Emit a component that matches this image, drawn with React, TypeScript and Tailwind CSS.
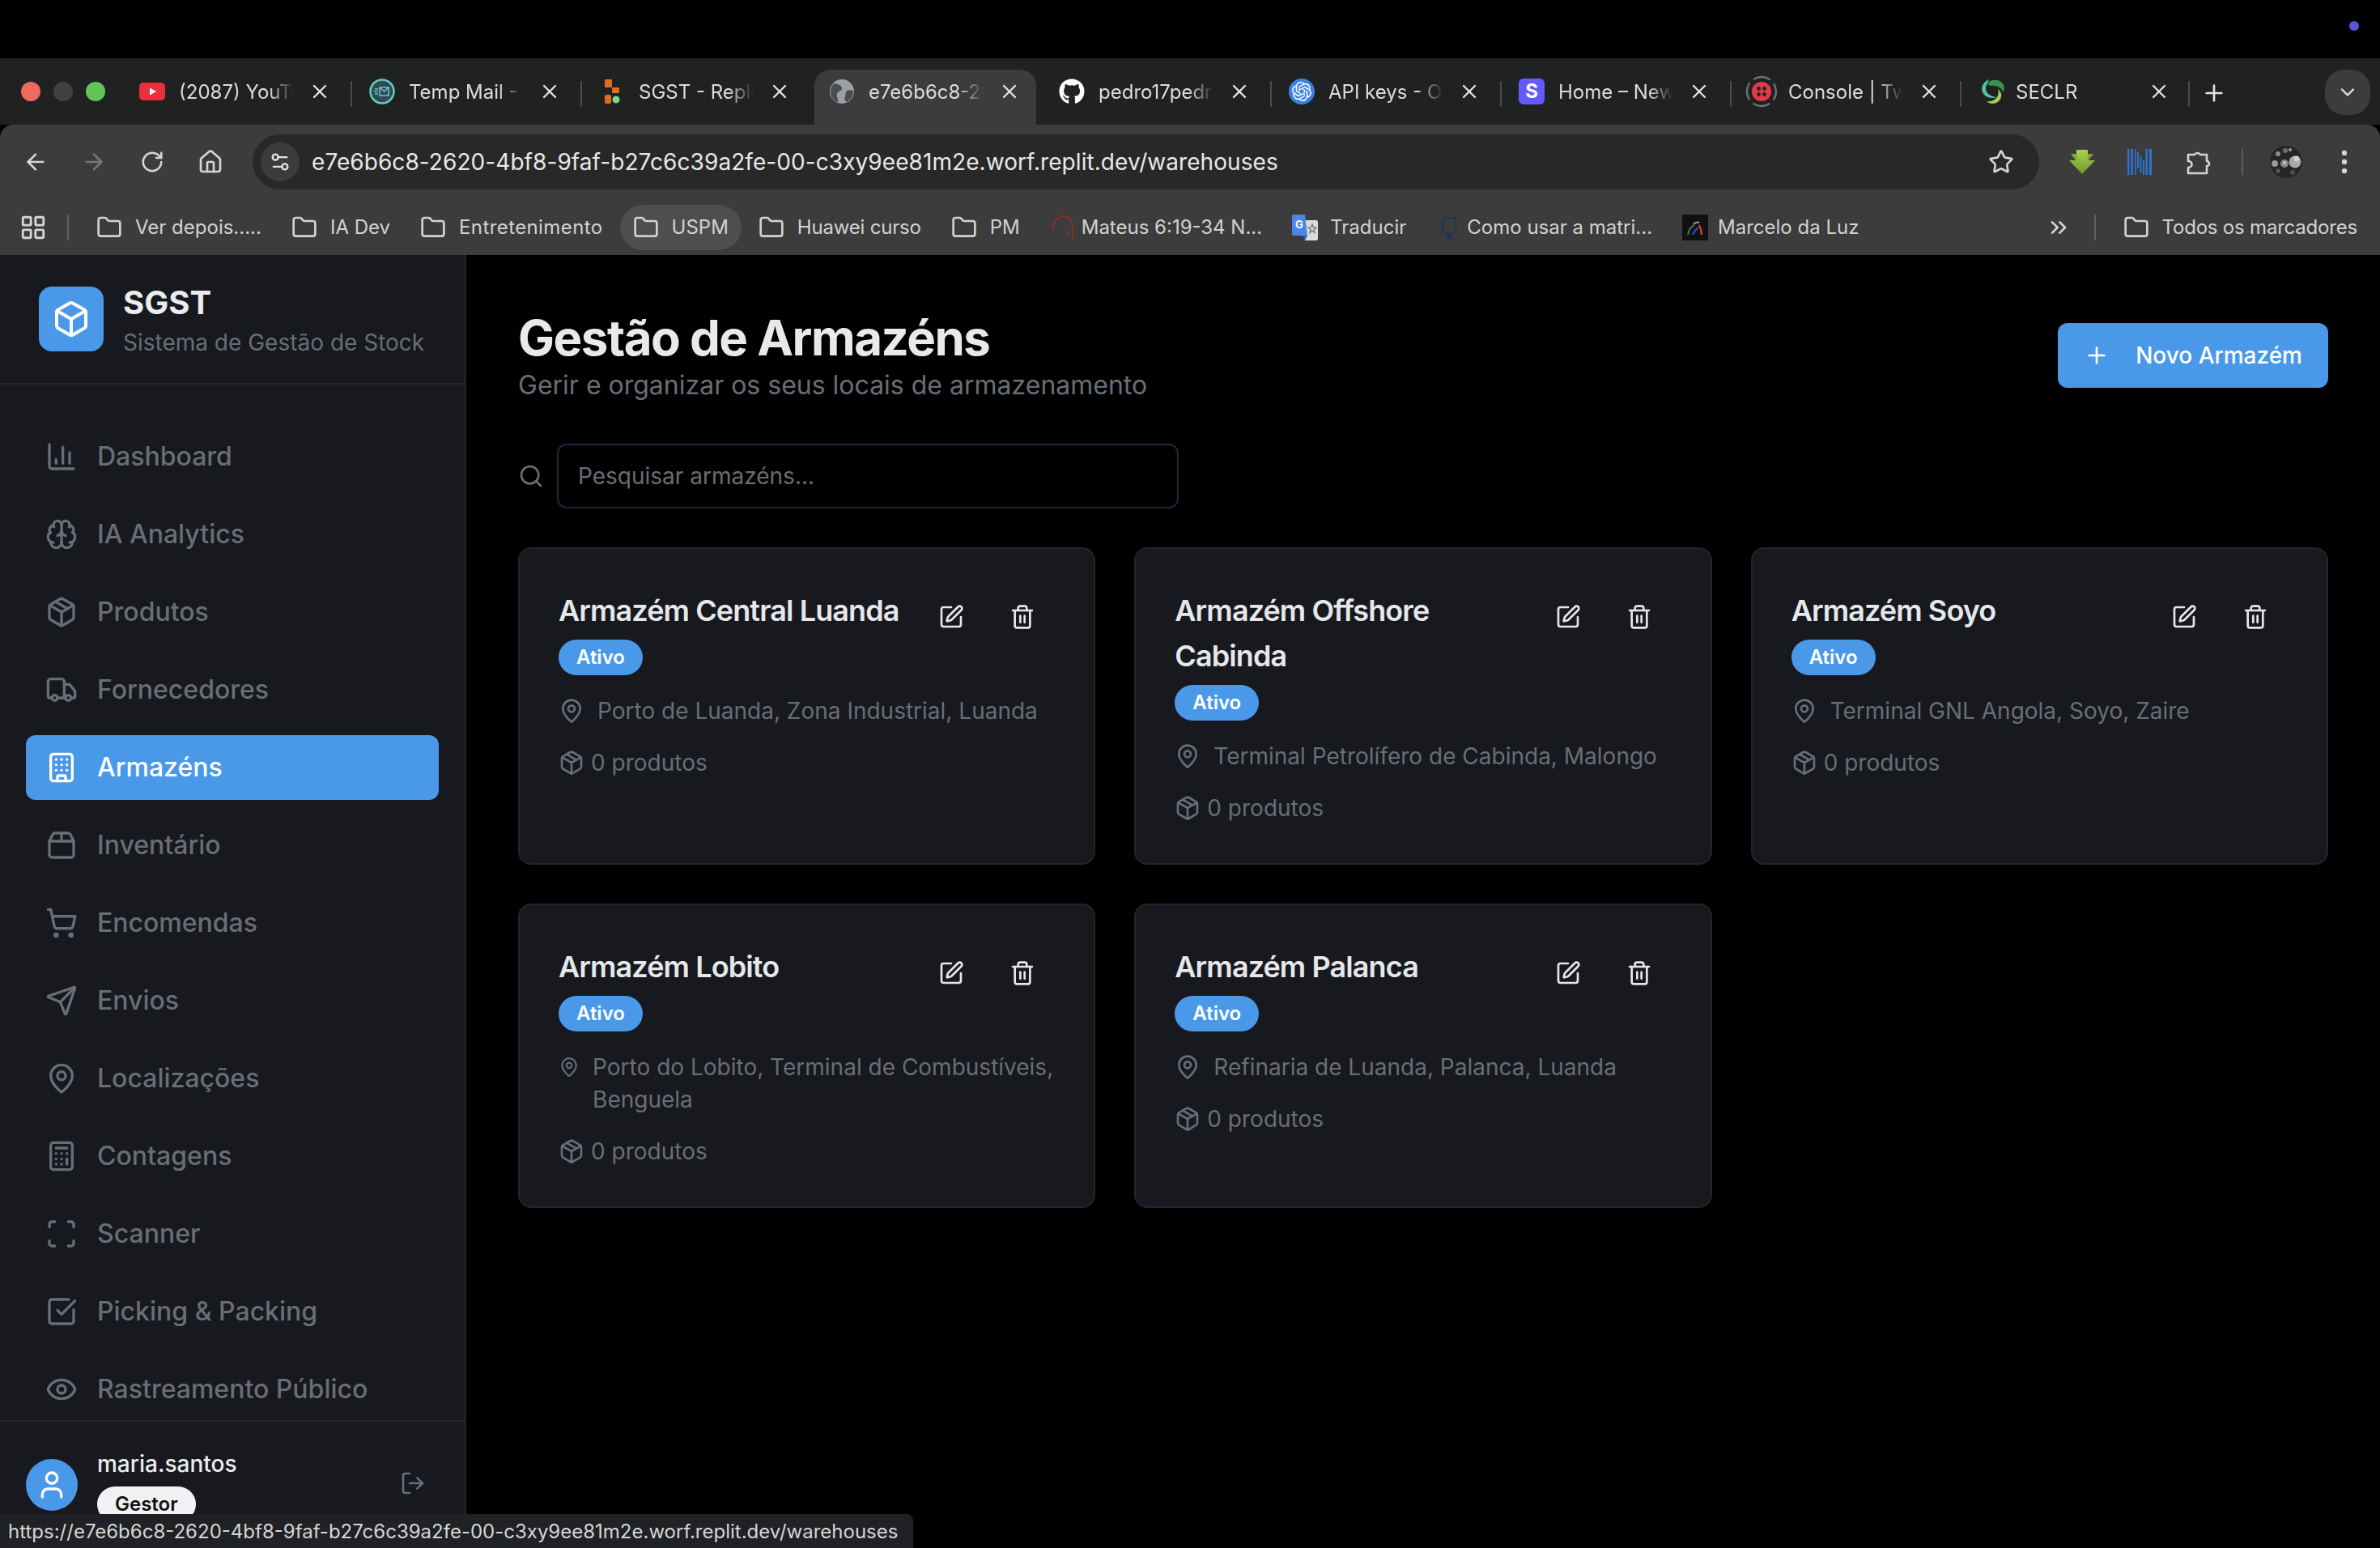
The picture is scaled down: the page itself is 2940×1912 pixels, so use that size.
import React from 'react';
import {
  ArrowLeft, ArrowRight, BarChart3, Box, Brain, Building, Calculator, CheckSquare, ChevronDown, ChevronsRight,
  Eye, Folder, Home, LayoutGrid, LogOut, MapPin, MoreVertical, Package, Package2, Plus, RotateCw, Scan, Search,
  Send, Settings2, ShoppingCart, SquarePen, Star, Trash2, Truck, User, X,
} from 'lucide-react';
import { FaGithub } from 'react-icons/fa';
import { SiOpenai } from 'react-icons/si';

const YoutubeIcon = () => (
  <svg viewBox="0 0 32 32" className="w-8 h-8">
    <rect x="0" y="5" width="32" height="22" rx="5" fill="#e9303c" />
    <path d="M13 11.5l8 4.5-8 4.5z" fill="#fff" />
  </svg>
);

const TempMailIcon = () => (
  <svg viewBox="0 0 32 32" className="w-8 h-8">
    <circle cx="16" cy="16" r="14.5" fill="#33465c" stroke="#5fd0b5" strokeWidth="2.5" />
    <path d="M13 11h11v10H13z" fill="none" stroke="#5fd0b5" strokeWidth="1.6" />
    <path d="M13 11l5.5 5 5.5-5M7 13h4M6 16h5M7 19h4" fill="none" stroke="#5fd0b5" strokeWidth="1.6" />
  </svg>
);

const ReplIcon = () => (
  <svg viewBox="0 0 32 32" className="w-8 h-8">
    <rect x="7" y="1" width="9" height="10" rx="1" fill="#e46a1f" />
    <rect x="16" y="11" width="9" height="7" rx="1" fill="#e46a1f" />
    <rect x="7" y="20" width="8" height="11" rx="2" fill="#e46a1f" />
    <circle cx="21" cy="26" r="4.5" fill="#7fd88a" />
  </svg>
);

const GlobeIcon = () => (
  <svg viewBox="0 0 32 32" className="w-8 h-8">
    <circle cx="16" cy="16" r="15" fill="#9aa0a6" />
    <path d="M6 6c5 1 10 2 10 6s-5 3-6 7 2 6 1 10c-5-1-9-6-9-13 0-4 2-7 4-10z" fill="#4b4d4f" />
    <path d="M22 15c4-1 7-1 8 1 0 6-3 10-8 13-3-2-3-5-2-8 1-2 0-4 2-6z" fill="#4b4d4f" />
  </svg>
);

const OpenAiIcon = () => (
  <span className="w-8 h-8 rounded-full bg-[#3b82e6] flex items-center justify-center">
    <SiOpenai className="w-6 h-6 text-white" />
  </span>
);

const StripeIcon = () => (
  <span className="w-8 h-8 rounded-md bg-[#635bff] flex items-center justify-center text-white font-bold text-[24px] leading-none">S</span>
);

const TwilioIcon = () => (
  <svg viewBox="0 0 40 40" className="w-10 h-10 shrink-0">
    <circle cx="20" cy="20" r="18" fill="none" stroke="#6e7072" strokeWidth="2.4" strokeDasharray="22 6.27" strokeDashoffset="11" />
    <circle cx="20" cy="20" r="12" fill="#e5394a" />
    <circle cx="16.5" cy="16.5" r="2.4" fill="#202222" />
    <circle cx="23.5" cy="16.5" r="2.4" fill="#202222" />
    <circle cx="16.5" cy="23.5" r="2.4" fill="#202222" />
    <circle cx="23.5" cy="23.5" r="2.4" fill="#202222" />
  </svg>
);

const SeclrIcon = () => (
  <svg viewBox="0 0 32 32" className="w-8 h-8">
    <path d="M11 6C16 0 27 0 31 8c1 3 1 6 0 9-3-6-9-9-15-8-2 0-4-1-5-3z" fill="#3a9150" />
    <path d="M13 1C4 5 1 14 8 21c4 3 10 4 14 2-7-1-14-5-13-12 1-4 3-7 4-10z" fill="#4fc0aa" />
    <path d="M24 13c5 4 6 10 1 15-4 4-11 4-15 0 5 1 10-1 13-5 2-3 2-7 1-10z" fill="#a3cf4c" />
  </svg>
);

const GreenArrowIcon = () => (
  <svg viewBox="0 0 32 30" className="w-8 h-[30px]">
    <defs>
      <linearGradient id="arrowFill" x1="0" y1="0" x2="0" y2="1">
        <stop offset="0" stopColor="#a9d255" />
        <stop offset="1" stopColor="#6f9a2a" />
      </linearGradient>
    </defs>
    <path d="M2 5h7v8H8zM30 5h-7v8h1z" fill="#7fa435" />
    <path d="M9 0h14v13h9L16 30 0 13h9z" fill="url(#arrowFill)" />
  </svg>
);

const NExtIcon = () => (
  <svg viewBox="0 0 32 32" className="w-8 h-8" fill="#2f73d0">
    <rect x="0" y="0" width="2.5" height="32" />
    <rect x="4.500" y="0" width="2.5" height="32" />
    <rect x="9" y="0" width="1.500" height="32" />
    <rect x="12" y="4" width="2" height="20" />
    <rect x="15.500" y="9" width="2" height="20" />
    <rect x="19" y="14" width="2" height="18" />
    <rect x="22.500" y="0" width="2.5" height="32" />
    <rect x="27" y="0" width="3" height="32" />
  </svg>
);

const PuzzleIcon = () => (
  <svg viewBox="0 0 32 32" className="w-8 h-8" fill="none" stroke="#d5d5d5" strokeWidth="2.6" strokeLinejoin="round">
    <path d="M3 7h8a4 4 0 0 1 7 0h8v8a3 3 0 0 1 0 6v9H3v-7a4 3.500 0 0 0 0-8z" />
  </svg>
);

const AvatarIcon = () => (
  <svg viewBox="0 0 40 40" className="w-10 h-10">
    <circle cx="20" cy="20" r="20" fill="#262626" />
    <circle cx="31" cy="20" r="7.5" fill="#a8a8a8" />
    <circle cx="33" cy="16" r="3.5" fill="#cfcfcf" />
    <circle cx="18" cy="22" r="5" fill="#8a8a8a" />
    <circle cx="18" cy="21" r="2" fill="#c4c4c4" />
    <circle cx="6" cy="22" r="4" fill="#9a9a9a" />
    <circle cx="10" cy="10" r="3" fill="#8e8e8e" />
    <circle cx="19" cy="6" r="3" fill="#6e6e6e" />
    <circle cx="25" cy="5" r="2" fill="#a0a0a0" />
    <circle cx="10" cy="31" r="2.500" fill="#5a5a5a" />
    <circle cx="28" cy="33" r="3" fill="#4c4c4c" />
  </svg>
);

const MateusIcon = () => (
  <svg viewBox="0 0 32 32" className="w-8 h-8" fill="none" stroke="#8c2b2b" strokeWidth="2">
    <path d="M4 18C4 8 9 2 16 2s12 6 12 14v14" />
    <path d="M22 20v6" />
  </svg>
);

const TranslateIcon = () => (
  <svg viewBox="0 0 32 32" className="w-8 h-8">
    <path d="M13 7h17a2 2 0 0 1 2 2v21a2 2 0 0 1-2 2H16z" fill="#dadce0" />
    <path d="M2 0h14l3 26H2a2 2 0 0 1-2-2V2a2 2 0 0 1 2-2z" fill="#4a86e8" />
    <path d="M13 26h6l-3 6z" fill="#2f5db0" />
    <text x="9" y="17" textAnchor="middle" fontSize="13" fontWeight="700" fill="#fff">G</text>
    <path d="M25 12l1.500 4h3.500l-3 2.500 1 4-3-2.500-3 2.500 1-4-3-2.500h3.500z" fill="none" stroke="#6b6f75" strokeWidth="1.2" />
  </svg>
);

const ComoUsarIcon = () => (
  <svg viewBox="0 0 32 32" className="w-8 h-8" fill="none" stroke="#1d3461" strokeWidth="2">
    <path d="M10 4h12c2 2 3 5 3 8s-1 6-2 8-3 4-7 4-6-2-7-4-2-5-2-8 1-6 3-8z" />
    <circle cx="16" cy="28" r="2" fill="#1d3461" />
  </svg>
);

const MarceloIcon = () => (
  <svg viewBox="0 0 32 32" className="w-8 h-8">
    <rect width="32" height="32" fill="#111" />
    <path d="M7 25c1-6 4-10 8-12" fill="none" stroke="#2f7e4c" strokeWidth="2" />
    <path d="M13 25c2-4 4-7 7-9" fill="none" stroke="#2a45c0" strokeWidth="2.500" />
    <path d="M24 25c0-5-1-8-3-12" fill="none" stroke="#c8402f" strokeWidth="2.500" />
    <path d="M14 12c2-2 5-3 7-2" fill="none" stroke="#c99a5a" strokeWidth="2" />
  </svg>
);

const tabs = [
  { title: '(2087) YouTube', icon: <YoutubeIcon />, sep: false },
  { title: 'Temp Mail - Disposable', icon: <TempMailIcon />, sep: true },
  { title: 'SGST - Replit', icon: <ReplIcon />, sep: true },
  { title: 'e7e6b6c8-2620', icon: <GlobeIcon />, sep: false, active: true },
  { title: 'pedro17pedro', icon: <FaGithub className="w-8 h-8 text-white" />, sep: false },
  { title: 'API keys - OpenAI', icon: <OpenAiIcon />, sep: true },
  { title: 'Home – New', icon: <StripeIcon />, sep: true },
  { title: 'Console | Twilio', icon: <TwilioIcon />, sep: true },
  { title: 'SECLR', icon: <SeclrIcon />, sep: true, textBox: 'ml-[14px] w-[145px]' },
];

const bookmarks = [
  { label: 'Ver depois.....', gap: 'gap-4' },
  { label: 'IA Dev', gap: 'gap-4' },
  { label: 'Entretenimento', gap: 'gap-4 tracking-[0.4px]' },
  { label: 'USPM', gap: 'gap-4', hover: true },
  { label: 'Huawei curso', gap: 'gap-4 tracking-[-0.2px]' },
  { label: 'PM', gap: 'gap-4' },
  { label: 'Mateus 6:19-34 N...', icon: <MateusIcon />, gap: 'gap-[7px]' },
  { label: 'Traducir', icon: <TranslateIcon />, gap: 'gap-[15px]' },
  { label: 'Como usar a matri...', icon: <ComoUsarIcon />, gap: 'gap-[6px]' },
  { label: 'Marcelo da Luz', icon: <MarceloIcon />, gap: 'gap-[12px]' },
];

const navItems = [
  { label: 'Dashboard', icon: BarChart3 },
  { label: 'IA Analytics', icon: Brain },
  { label: 'Produtos', icon: Package },
  { label: 'Fornecedores', icon: Truck },
  { label: 'Armazéns', icon: Building, active: true },
  { label: 'Inventário', icon: Package2 },
  { label: 'Encomendas', icon: ShoppingCart },
  { label: 'Envios', icon: Send },
  { label: 'Localizações', icon: MapPin },
  { label: 'Contagens', icon: Calculator },
  { label: 'Scanner', icon: Scan },
  { label: 'Picking & Packing', icon: CheckSquare },
  { label: 'Rastreamento Público', icon: Eye },
];

const warehouses = [
  { name: 'Armazém Central Luanda', address: 'Porto de Luanda, Zona Industrial, Luanda' },
  { name: 'Armazém Offshore Cabinda', address: 'Terminal Petrolífero de Cabinda, Malongo' },
  { name: 'Armazém Soyo', address: 'Terminal GNL Angola, Soyo, Zaire' },
  { name: 'Armazém Lobito', address: 'Porto do Lobito, Terminal de Combustíveis, Benguela' },
  { name: 'Armazém Palanca', address: 'Refinaria de Luanda, Palanca, Luanda' },
];

function BrowserChrome() {
  return (
    <div className="shrink-0">
      <div className="h-[72px] bg-black flex justify-end pt-[26px] pr-[26px]">
        <div className="w-3 h-3 rounded-full bg-[#5856d6]" />
      </div>

      <div className="h-[82px] bg-[#202222] flex pt-[14px]">
        <div className="w-[140px] h-[54px] pl-[26px] flex items-center gap-4">
          <div className="w-6 h-6 rounded-full bg-[#ec6a5e]" />
          <div className="w-6 h-6 rounded-full bg-[#3f4241]" />
          <div className="w-6 h-6 rounded-full bg-[#61c554]" />
        </div>
        {tabs.map((tab) => (
          <div key={tab.title} className="relative w-[284px] h-[68px] pb-[14px] flex items-center pl-[32px] shrink-0">
            {tab.active && <div className="absolute inset-y-0 left-[14px] right-[-4px] bg-[#3c3c3c] rounded-t-[20px]" />}
            {tab.sep && <div className="absolute left-[9px] top-[14px] w-[2px] h-[32px] bg-[#4a4c4c]" />}
            <div className="relative w-8 h-8 flex items-center justify-center shrink-0">{tab.icon}</div>
            <div className={`relative pt-[2px] overflow-hidden whitespace-nowrap text-[24px] text-[#dcdcdc] [mask-image:linear-gradient(to_right,black_78%,transparent)] ${tab.textBox ?? 'ml-[17px] w-[142px]'}`}>
              {tab.title}
            </div>
            <X className="relative ml-[18px] w-[28px] h-[28px] text-[#e3e3e3] shrink-0" />
          </div>
        ))}
        <div className="w-[2px] h-[32px] bg-[#4a4c4c] mt-[14px] ml-[7px]" />
        <Plus className="w-8 h-8 ml-[14px] mt-[13px] text-[#e3e3e3]" />
        <div className="ml-auto mr-3 w-[56px] h-[56px] rounded-[24px] bg-[#3c3c3c] flex items-center justify-center">
          <ChevronDown className="w-7 h-7 text-[#e3e3e3]" />
        </div>
      </div>

      <div className="h-[161px] bg-[#3c3c3c] rounded-t-[16px] flex flex-col">
        <div className="flex items-center mt-3 h-[68px] pl-2 pr-2">
          <button className="w-[72px] flex justify-center text-[#d5d5d5]"><ArrowLeft className="w-8 h-8" /></button>
          <button className="w-[72px] flex justify-center text-[#777]"><ArrowRight className="w-8 h-8" /></button>
          <button className="w-[72px] flex justify-center text-[#d5d5d5]"><RotateCw className="w-[30px] h-[30px]" /></button>
          <button className="w-[72px] flex justify-center text-[#d5d5d5]"><Home className="w-8 h-8" /></button>
          <div className="ml-4 flex-1 h-[68px] rounded-full bg-[#282828] flex items-center pl-[10px] pr-[31px]">
            <div className="w-12 h-12 rounded-full bg-[#3c3c3c] flex items-center justify-center">
              <Settings2 className="w-7 h-7 text-[#e3e3e3]" />
            </div>
            <span className="ml-[15px] text-[28px] tracking-[0.07px] text-[#e8e8e8] whitespace-nowrap">
              e7e6b6c8-2620-4bf8-9faf-b27c6c39a2fe-00-c3xy9ee81m2e.worf.replit.dev/warehouses
            </span>
            <Star className="ml-auto w-8 h-8 text-[#d5d5d5]" />
          </div>
          <div className="ml-[17px] w-[72px] flex justify-center"><GreenArrowIcon /></div>
          <div className="w-[72px] flex justify-center"><NExtIcon /></div>
          <div className="w-[72px] flex justify-center"><PuzzleIcon /></div>
          <div className="ml-[17px] w-[2px] h-8 bg-[#5e5e5e]" />
          <div className="ml-[17px] w-[72px] flex justify-center"><AvatarIcon /></div>
          <div className="w-[72px] flex justify-center text-[#d5d5d5]"><MoreVertical className="w-[38px] h-[38px]" /></div>
        </div>

        <div className="mt-[19px] h-[56px] flex items-center text-[24px] text-[#d2d2d2]">
          <LayoutGrid className="ml-[24px] w-[34px] h-[34px] text-[#d5d5d5]" />
          <div className="ml-[25px] w-[2px] h-8 bg-[#5e5e5e] mr-[18px]" />
          <div className="flex items-center gap-[5px]">
            {bookmarks.map((b) => (
              <div key={b.label} className={`h-[56px] px-4 flex items-center rounded-full whitespace-nowrap ${b.gap} ${b.hover ? 'bg-[#4e4e4e]' : ''}`}>
                {b.icon ?? <Folder className="w-8 h-8 text-[#d2d2d2]" />}
                <span>{b.label}</span>
              </div>
            ))}
          </div>
          <ChevronsRight className="ml-auto w-8 h-8 text-[#d5d5d5]" />
          <div className="ml-[28px] w-[2px] h-8 bg-[#5e5e5e]" />
          <div className="ml-[18px] pl-4 pr-[28px] flex items-center gap-4 whitespace-nowrap">
            <Folder className="w-8 h-8 text-[#d2d2d2]" />
            <span className="tracking-[-0.2px]">Todos os marcadores</span>
          </div>
        </div>
      </div>
    </div>
  );
}

function Sidebar() {
  return (
    <aside className="w-[576px] shrink-0 bg-[#17191e] border-r-2 border-[#232529] flex flex-col">
      <div className="h-[160px] shrink-0 border-b-2 border-[#232529] pl-[48px] flex items-center gap-[24px]">
        <div className="w-[80px] h-[80px] rounded-[16px] bg-[#4a99e9] flex items-center justify-center">
          <Box className="w-[48px] h-[48px] text-white" />
        </div>
        <div>
          <div className="text-[40px] leading-[56px] font-bold text-[#ececee]">SGST</div>
          <div className="mt-[1px] text-[28px] leading-[40px] text-[#696e76]">Sistema de Gestão de Stock</div>
        </div>
      </div>

      <nav className="h-[1279px] shrink-0 pt-[49px] px-[32px] flex flex-col gap-4">
        {navItems.map((item) => {
          const Icon = item.icon;
          return (
            <div
              key={item.label}
              className={`h-[80px] shrink-0 rounded-[12px] px-6 flex items-center gap-6 text-[32px] font-medium ${item.active ? 'bg-[#4a99e9] text-white' : 'text-[#696e76]'}`}
            >
              <Icon className="w-10 h-10 shrink-0" />
              <span>{item.label}</span>
            </div>
          );
        })}
      </nav>

      <div className="border-t-2 border-[#232529] pl-[32px] pr-[48px] pt-[30px] flex items-start">
        <div className="w-[64px] h-[64px] mt-[16px] rounded-full bg-[#4a99e9] flex items-center justify-center">
          <User className="w-10 h-10 text-white" />
        </div>
        <div className="ml-[24px] flex-1">
          <div className="text-[28px] leading-[40px] font-medium text-[#ececee] mt-[2px]">maria.santos</div>
          <div className="mt-[8px] inline-flex h-[44px] px-[22px] items-center rounded-full bg-[#f0f1f2] text-[24px] font-semibold text-[#111]">Gestor</div>
        </div>
        <LogOut className="w-8 h-8 mt-[30px] text-[#696e76]" />
      </div>
    </aside>
  );
}

function WarehouseCard({ name, address }: { name: string; address: string }) {
  return (
    <div className="rounded-[16px] bg-[#17191e] border-2 border-[#232529] p-[48px]">
      <div className="flex items-start gap-4">
        <div className="flex-1 min-w-0">
          <h3 className="text-[36px] leading-[56px] font-semibold text-[#e5e7eb] tracking-[-0.9px]">{name}</h3>
          <span className="mt-2 inline-flex h-[44px] px-[22px] items-center rounded-full bg-[#4a99e9] text-[24px] font-semibold text-white">Ativo</span>
        </div>
        <div className="flex gap-2 shrink-0">
          <button className="w-[80px] h-[72px] flex items-center justify-center text-[#e5e7eb]"><SquarePen className="w-8 h-8" /></button>
          <button className="w-[80px] h-[72px] flex items-center justify-center text-[#e5e7eb]"><Trash2 className="w-8 h-8" /></button>
        </div>
      </div>
      <div className="mt-6 flex items-start gap-4 text-[28px] leading-[40px] text-[#696e76]">
        <MapPin className="w-8 h-8 mt-1" />
        <span>{address}</span>
      </div>
      <div className="mt-6 flex items-center gap-2 text-[28px] leading-[40px] text-[#696e76]">
        <Package className="w-8 h-8 shrink-0" />
        <span>0 produtos</span>
      </div>
    </div>
  );
}

export default function App() {
  return (
    <div className="relative h-screen flex flex-col bg-black overflow-hidden font-['Inter',sans-serif]">
      <BrowserChrome />
      <div className="flex-1 min-h-0 flex overflow-hidden">
        <Sidebar />
        <main className="flex-1 p-[64px] pt-[66px]">
          <div className="flex items-center justify-between">
            <div>
              <h1 className="text-[60px] leading-[72px] font-bold text-[#e8e9eb] tracking-[-1.5px]">Gestão de Armazéns</h1>
              <p className="mt-[3px] text-[32px] leading-[40px] text-[#696e76]">Gerir e organizar os seus locais de armazenamento</p>
            </div>
            <button className="h-[80px] rounded-[12px] bg-[#4a99e9] text-white text-[28px] font-medium flex items-center px-8 gap-8">
              <Plus className="w-8 h-8" />
              Novo Armazém
            </button>
          </div>

          <div className="mt-[52px] flex items-center gap-[16px]">
            <Search className="w-8 h-8 text-[#696e76]" />
            <div className="w-[768px] h-[80px] rounded-[12px] border-2 border-[#1e293b] flex items-center px-6 text-[28px] text-[#696e76]">
              Pesquisar armazéns...
            </div>
          </div>

          <div className="mt-[48px] grid grid-cols-3 gap-[48px]">
            {warehouses.map((w) => (
              <WarehouseCard key={w.name} name={w.name} address={w.address} />
            ))}
          </div>
        </main>
      </div>

      <div className="absolute bottom-0 left-0 h-[42px] w-[1128px] pt-[2px] bg-[#1f2124] rounded-tr-[8px] flex items-center pl-[10px] text-[24px] text-[#d6d6d6] whitespace-nowrap">
        https://e7e6b6c8-2620-4bf8-9faf-b27c6c39a2fe-00-c3xy9ee81m2e.worf.replit.dev/warehouses
      </div>
    </div>
  );
}
